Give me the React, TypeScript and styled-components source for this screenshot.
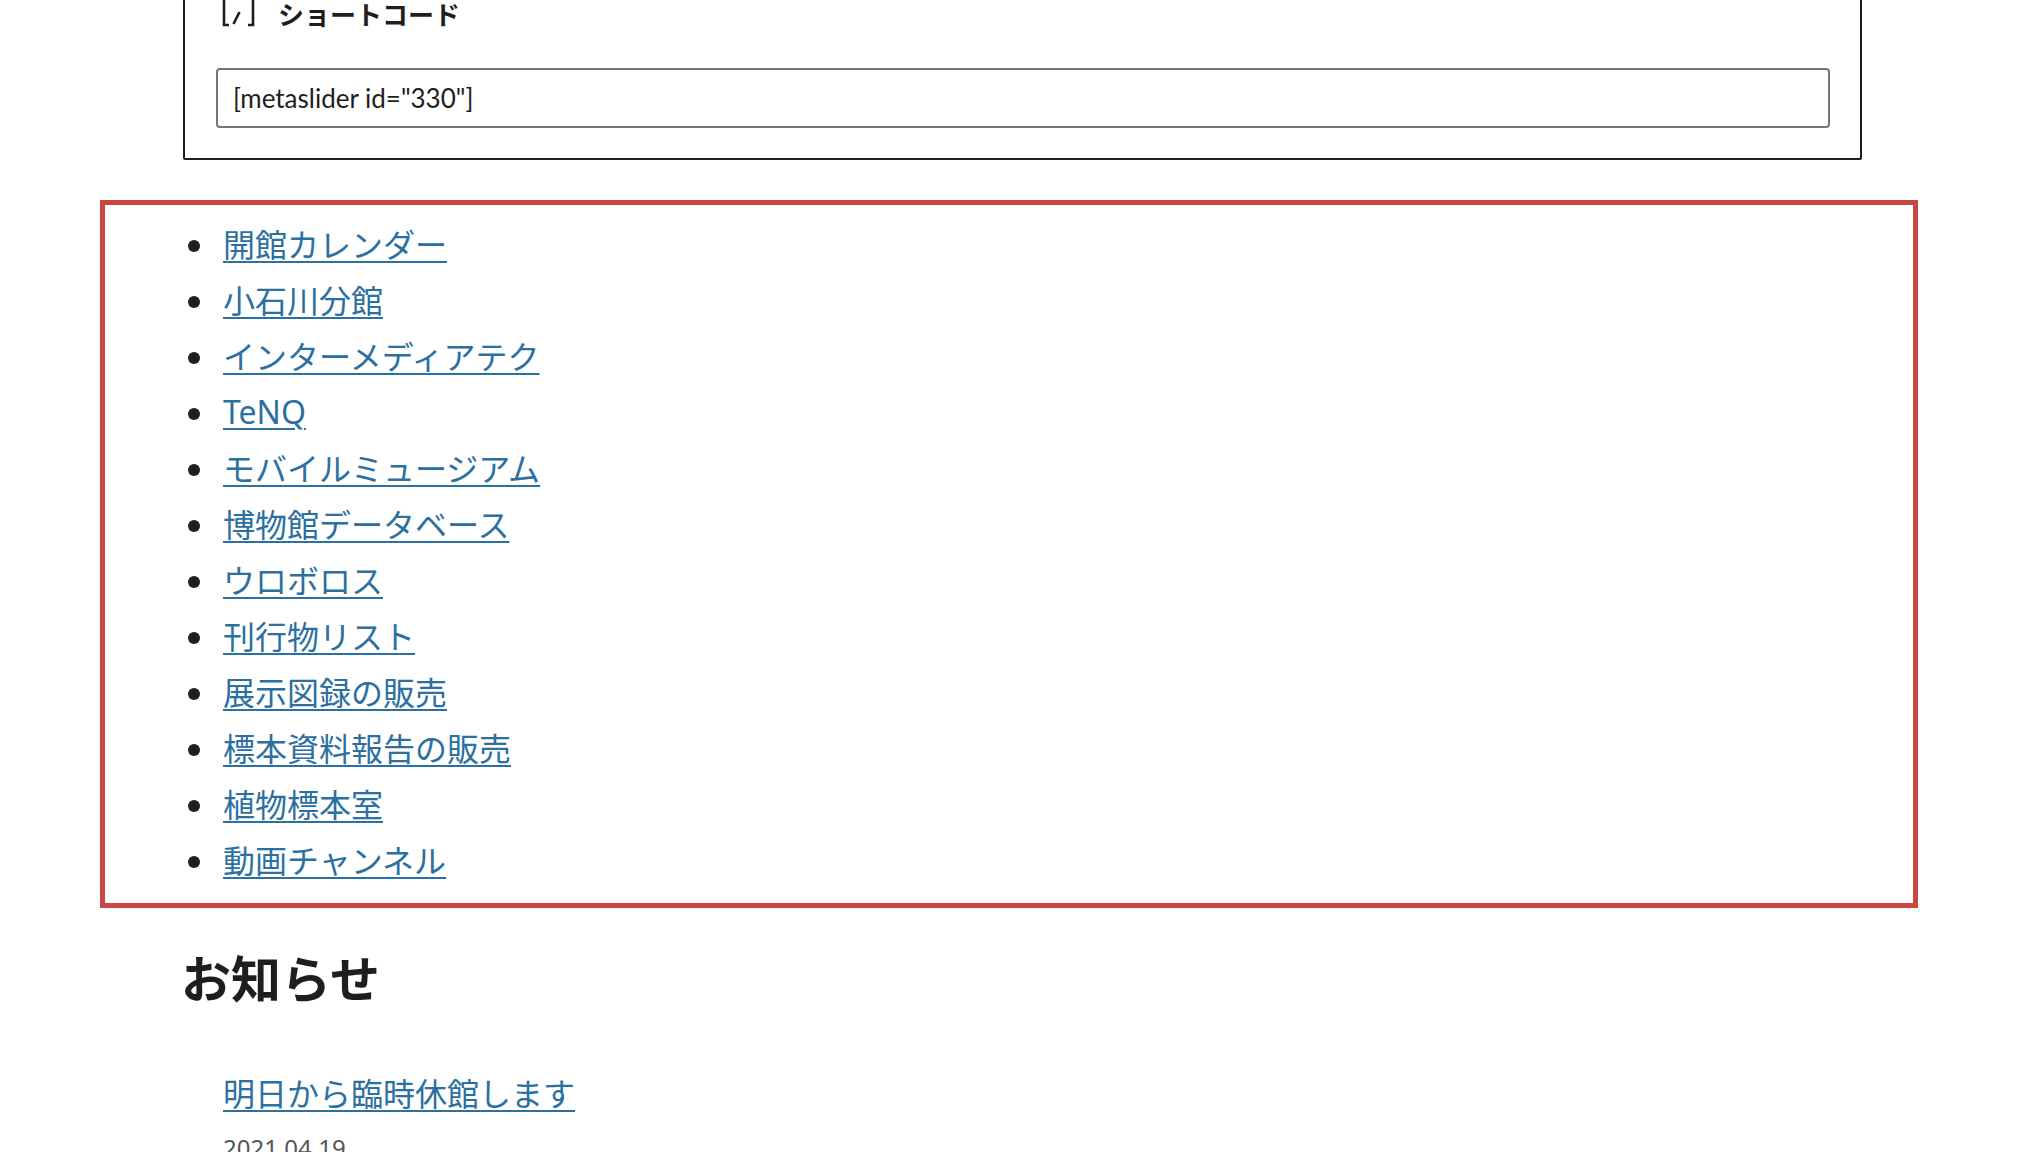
import React from "react";
import styled, { createGlobalStyle } from "styled-components";

const GlobalStyle = createGlobalStyle`
  html, body {
    margin: 0;
    padding: 0;
    background: #ffffff;
  }
  body {
    font-family: "Noto Sans", "Noto Sans CJK JP", sans-serif;
    color: #1e1e1e;
  }
`;

const Page = styled.div`
  margin-top: -37px;
  padding-bottom: 80px;
`;

const ShortcodeBlock = styled.div`
  margin-left: 183px;
  width: 1679px;
  box-sizing: border-box;
  border: 2px solid #1e1e1e;
  border-radius: 2px;
  padding: 30px 30px 30px 31px;
`;

const BlockLabel = styled.div`
  display: flex;
  align-items: center;
  gap: 22px;
  height: 36px;
  font-size: 26px;
  font-weight: 700;
  font-family: "Noto Sans CJK JP", sans-serif;
`;

const ShortcodeInput = styled.input`
  display: block;
  margin-top: 37px;
  width: 100%;
  height: 60px;
  box-sizing: border-box;
  border: 2px solid #757575;
  border-radius: 4px;
  padding: 0 15px;
  font-family: Lato, "Noto Sans", sans-serif;
  font-size: 26px;
  color: #1e1e1e;
  background: #fff;
  outline: none;
`;

const LinkPanel = styled.div`
  margin: 40px 0 0 100px;
  width: 1818px;
  box-sizing: border-box;
  border: 5px solid #cc4545;
  padding: 10px 0 16px 83px;
`;

const LinkList = styled.ul`
  margin: 0;
  padding: 0;
  list-style: none;
`;

const LinkItem = styled.li`
  display: flex;
  align-items: center;
  gap: 23px;
  height: 56px;
  font-size: 32px;
`;

const Bullet = styled.span`
  width: 12px;
  height: 12px;
  border-radius: 50%;
  background: #1e1e1e;
  margin-top: 6px;
  flex: none;
`;

const TextLink = styled.a`
  color: #2b70a0;
  text-decoration: underline;
  text-decoration-thickness: 2px;
  text-underline-offset: 4px;
`;

const SectionTitle = styled.h2`
  margin: 37px 0 0 181px;
  font-size: 50px;
  font-weight: 700;
  line-height: 62px;
  font-family: "Noto Sans CJK JP", sans-serif;
`;

const NewsEntry = styled.article`
  margin: 60px 0 0 223px;
`;

const NewsTitle = styled.div`
  font-size: 32px;
  line-height: 54px;
`;

const NewsDate = styled.div`
  margin-top: 10px;
  font-size: 24px;
  line-height: 33px;
  color: #555;
`;

const ShortcodeIcon = () => (
  <svg width="40" height="36" viewBox="0 0 40 36" fill="none" stroke="#1e1e1e" strokeWidth="2.6">
    <path d="M13 0 H8 V30 H13" />
    <path d="M32 0 H37 V30 H32" />
    <path d="M17.5 29 L23.5 17" />
  </svg>
);

const links = [
  "開館カレンダー",
  "小石川分館",
  "インターメディアテク",
  "TeNQ",
  "モバイルミュージアム",
  "博物館データベース",
  "ウロボロス",
  "刊行物リスト",
  "展示図録の販売",
  "標本資料報告の販売",
  "植物標本室",
  "動画チャンネル",
];

export default function App() {
  return (
    <>
      <GlobalStyle />
      <Page>
        <ShortcodeBlock>
          <BlockLabel>
            <ShortcodeIcon />
            <span>ショートコード</span>
          </BlockLabel>
          <ShortcodeInput readOnly value={'[metaslider id="330"]'} />
        </ShortcodeBlock>

        <LinkPanel>
          <LinkList>
            {links.map((label) => (
              <LinkItem key={label}>
                <Bullet />
                <TextLink href="#">{label}</TextLink>
              </LinkItem>
            ))}
          </LinkList>
        </LinkPanel>

        <SectionTitle>お知らせ</SectionTitle>
        <NewsEntry>
          <NewsTitle>
            <TextLink href="#">明日から臨時休館します</TextLink>
          </NewsTitle>
          <NewsDate>2021.04.19</NewsDate>
        </NewsEntry>
      </Page>
    </>
  );
}
